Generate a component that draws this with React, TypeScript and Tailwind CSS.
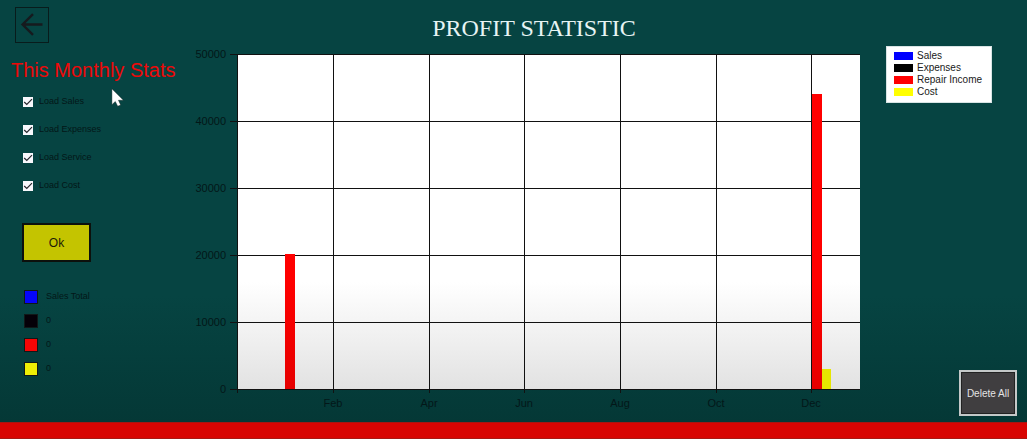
import { useState } from "react";

type SeriesKey = "sales" | "expenses" | "service" | "cost";

const filters: { key: SeriesKey; label: string }[] = [
  { key: "sales", label: "Load Sales" },
  { key: "expenses", label: "Load Expenses" },
  { key: "service", label: "Load Service" },
  { key: "cost", label: "Load Cost" },
];

const legend = [
  { label: "Sales", color: "bg-[#0000ff]" },
  { label: "Expenses", color: "bg-black" },
  { label: "Repair Income", color: "bg-[#ff0000]" },
  { label: "Cost", color: "bg-[#ffff00]" },
];

const totals = [
  { name: "Sales", value: "Sales Total", color: "bg-[#0505fa]" },
  { name: "Expenses", value: "0", color: "bg-[#050008]" },
  { name: "Repair income", value: "0", color: "bg-[#f50505]" },
  { name: "Cost", value: "0", color: "bg-[#eeee05]" },
];

const months = ["Feb", "Apr", "Jun", "Aug", "Oct", "Dec"];
const levels = [50000, 40000, 30000, 20000, 10000, 0];

const bars: { series: SeriesKey; x: number; value: number; fill: string }[] = [
  { series: "service", x: 95, value: 20100, fill: "url(#redBar)" },
  { series: "service", x: 622, value: 44000, fill: "url(#redBar)" },
  { series: "cost", x: 632, value: 3000, fill: "#e6e600" },
];

const LEFT = 48;
const RIGHT = 670;
const TOP = 9;
const BOTTOM = 344;

const yOf = (value: number) => Math.round(BOTTOM - (value / 50000) * (BOTTOM - TOP));
const xOf = (index: number) => Math.floor(LEFT + (index + 1) * 95.6);

function Chart({ visible }: { visible: Record<SeriesKey, boolean> }) {
  return (
    <svg viewBox="0 0 676 370" className="block w-full" role="img" aria-label="Profit by month">
      <defs>
        <linearGradient id="plot" x1="0" y1="0" x2="0" y2="1">
          <stop offset="0.68" stopColor="#ffffff" />
          <stop offset="1" stopColor="#e2e2e2" />
        </linearGradient>
        <linearGradient id="redBar" gradientUnits="userSpaceOnUse" x1="0" y1={TOP} x2="0" y2={BOTTOM}>
          <stop offset="0.68" stopColor="#ff0000" />
          <stop offset="1" stopColor="#e60000" />
        </linearGradient>
      </defs>
      <rect x={LEFT} y={TOP} width={RIGHT - LEFT} height={BOTTOM - TOP} fill="url(#plot)" />
      <g stroke="#111111" strokeWidth="1" shapeRendering="crispEdges">
        {levels.map((v) => (
          <line key={v} x1={LEFT - 8} x2={RIGHT} y1={yOf(v) + 0.5} y2={yOf(v) + 0.5} />
        ))}
        {months.map((m, i) => (
          <line key={m} x1={xOf(i) + 0.5} x2={xOf(i) + 0.5} y1={TOP} y2={BOTTOM + 4} />
        ))}
        <line x1={LEFT - 0.5} x2={LEFT - 0.5} y1={TOP} y2={BOTTOM + 4} />
      </g>
      {bars
        .filter((b) => visible[b.series])
        .map((b) => (
          <rect key={b.x} x={b.x} y={yOf(b.value)} width={b.series === "cost" ? 9 : 10} height={BOTTOM - yOf(b.value)} fill={b.fill} />
        ))}
      <g className="fill-[#031718] font-['Liberation_Sans',sans-serif] text-[11px]">
        {levels.map((v) => (
          <text key={v} x="36" y={yOf(v) + 4} textAnchor="end">
            {v}
          </text>
        ))}
        {months.map((m, i) => (
          <text key={m} x={xOf(i)} y="362" textAnchor="middle">
            {m}
          </text>
        ))}
      </g>
    </svg>
  );
}

export default function App() {
  const [visible, setVisible] = useState<Record<SeriesKey, boolean>>({
    sales: true,
    expenses: true,
    service: true,
    cost: true,
  });

  return (
    <div className="relative flex min-h-screen flex-col bg-[#064442] font-['Liberation_Sans',Arial,sans-serif] text-[#031718]">
      <main className="flex flex-1 bg-linear-to-b from-[#064442] from-70% to-[#043836]">
        <aside className="flex w-[190px] shrink-0 flex-col items-start pt-[7px]">
          <button
            type="button"
            aria-label="Back"
            className="ml-[15px] flex h-9 w-[34px] items-center justify-center border border-[#081c1c]"
          >
            <svg viewBox="0 0 24 24" className="h-6 w-6" fill="none" stroke="#161a1e" strokeWidth="2.4">
              <path d="M22.5 11.5H3M13 1.2L2.6 11.5L13 21.8" />
            </svg>
          </button>
          <h2 className="mt-[13px] ml-[11px] text-[20px] leading-7 whitespace-nowrap text-[#ee0808]">This Monthly Stats</h2>

          <div className="mt-1 ml-[23px]">
            {filters.map(({ key, label }) => (
              <label key={key} className="flex h-7 items-center gap-1.5 text-[9px] whitespace-nowrap">
                <span className="grid h-2.5 w-2.5">
                  <input
                    type="checkbox"
                    checked={visible[key]}
                    onChange={() => setVisible({ ...visible, [key]: !visible[key] })}
                    className="peer col-start-1 row-start-1 h-2.5 w-2.5 appearance-none bg-[#f8f8fc]"
                  />
                  <svg
                    viewBox="0 0 10 10"
                    className="pointer-events-none invisible col-start-1 row-start-1 h-2.5 w-2.5 peer-checked:visible"
                    fill="none"
                    stroke="#26262c"
                    strokeWidth="1.2"
                  >
                    <path d="M1.2 5L3.8 7.5L9 2.2" />
                  </svg>
                </span>
                {label}
              </label>
            ))}
          </div>

          <button
            type="button"
            className="mt-[23px] ml-[22px] h-[39px] w-[69px] border-2 border-[#0c100c] bg-[#c4c400] text-[12px] text-[#1c1c08]"
          >
            Ok
          </button>

          <ul className="mt-[23px] ml-[24px] text-[9px]">
            {totals.map((t) => (
              <li key={t.name} className="flex h-6 items-center gap-2">
                <span className={`h-3.5 w-3.5 border border-[#101818] ${t.color}`} />
                {t.value}
              </li>
            ))}
          </ul>
        </aside>

        <section className="min-w-0 flex-1 pt-[11px]">
          <h1 className="pl-3 text-center font-['Liberation_Serif',serif] text-[24px] leading-[34px] text-[#e6f4f4]">
            PROFIT STATISTIC
          </h1>
          <Chart visible={visible} />
        </section>

        <aside className="flex w-[161px] shrink-0 flex-col justify-between pt-[46px] pr-[10px] pb-[6px] pl-5">
          <ul className="h-[57px] w-[106px] border border-[#d8e4e4] bg-white py-[3px] pl-[7px] text-[10px] leading-3 text-[#202020]">
            {legend.map((item) => (
              <li key={item.label} className="flex items-center gap-1 whitespace-nowrap">
                <span className={`h-2 w-[19px] ${item.color}`} />
                {item.label}
              </li>
            ))}
          </ul>
          <button
            type="button"
            className="h-[46px] w-[58px] self-end border-2 border-[#c4c8c8] bg-[#403e40] text-[10px] whitespace-nowrap text-[#e4e4e4] inset-ring inset-ring-[#222222]"
          >
            Delete All
          </button>
        </aside>
      </main>
      <footer className="h-[17px] border-y border-t-[#a81410] border-b-[#a81814] bg-[#d80402]" />

      <svg viewBox="0 0 12 18" className="pointer-events-none absolute top-[88px] left-[111px] h-[19px] w-[13px]" aria-hidden="true">
        <path d="M0.7 0.8V15.8L3.9 12.8L6.2 17.3L9 16.1L6.9 11.6H11.6Z" fill="#ffffff" stroke="#102020" strokeWidth="0.4" />
      </svg>
    </div>
  );
}
